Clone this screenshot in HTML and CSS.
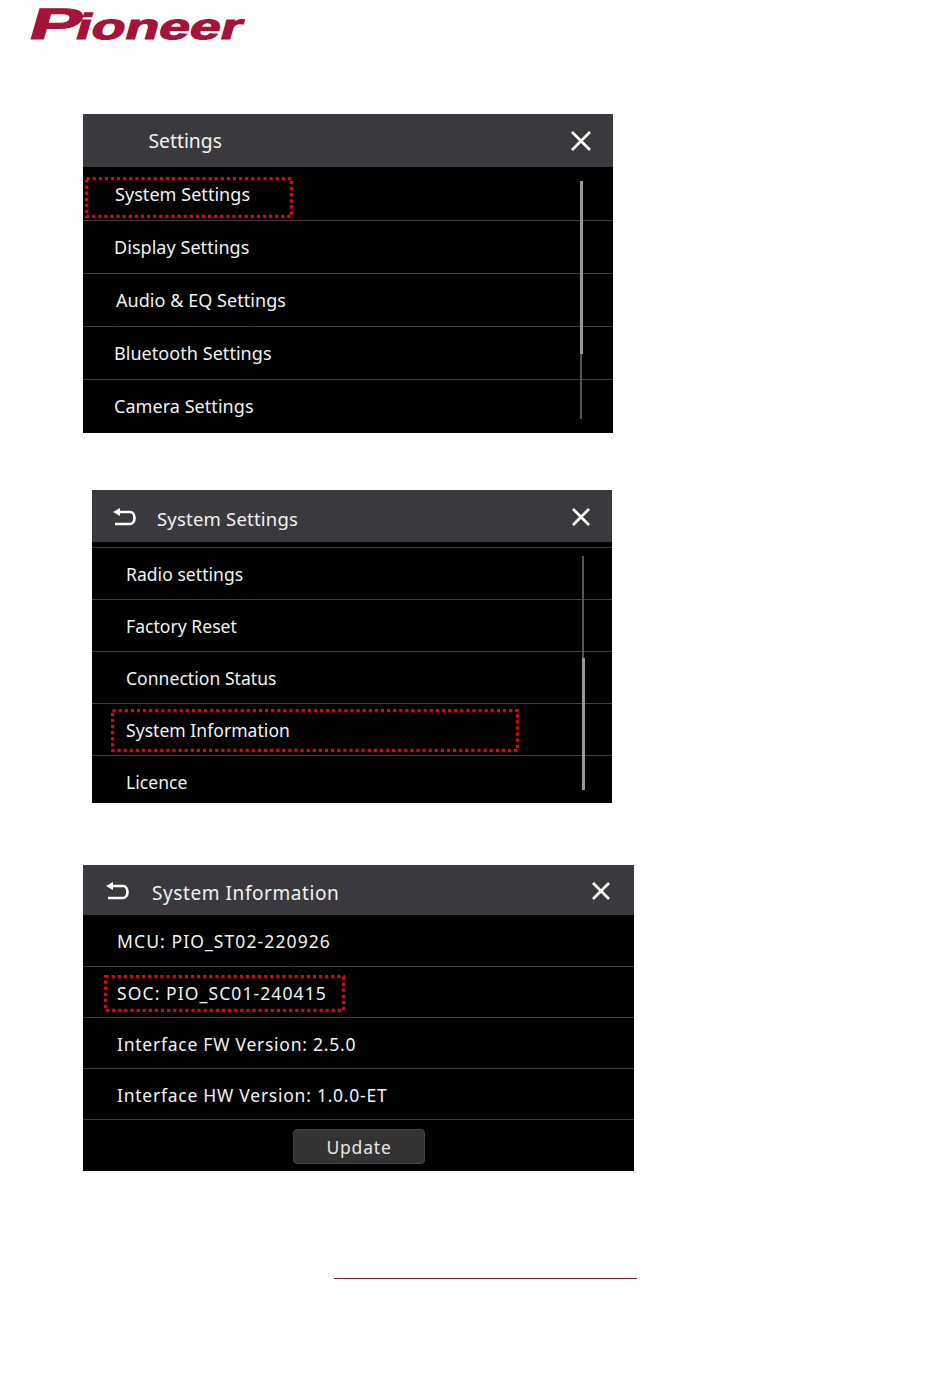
FILE: index.html
```html
<!DOCTYPE html>
<html lang="en">
<head>
<meta charset="utf-8">
<title>Pioneer System Information</title>
<link rel="stylesheet" href="styles.css">
</head>
<body>
<header class="brand">
  <svg class="logo" width="236" height="40" viewBox="0 0 236 40" aria-label="Pioneer">
    <g transform="skewX(-16)" class="logo-type">
      <text x="10" y="33" class="logo-p" textLength="52" lengthAdjust="spacingAndGlyphs">P</text>
      <text x="57" y="33" class="logo-rest" textLength="166" lengthAdjust="spacingAndGlyphs">ioneer</text>
    </g>
  </svg>
</header>

<section class="panel panel-a">
  <div class="bar"><span class="title">Settings</span>
    <svg class="close" width="22" height="22" viewBox="0 0 22 22"><path d="M2 2 L20 20 M20 2 L2 20"/></svg>
  </div>
  <div class="list">
    <div class="row row-first">System Settings
      <svg class="mark mark-a" width="208" height="41" viewBox="0 0 208 41"><rect x="1.5" y="1.5" width="205" height="38"/></svg>
    </div>
    <div class="row">Display Settings</div>
    <div class="row row-shift">Audio &amp; EQ Settings</div>
    <div class="row">Bluetooth Settings</div>
    <div class="row">Camera Settings</div>
    <div class="track"><div class="thumb"></div></div>
  </div>
</section>

<section class="panel panel-b">
  <div class="bar">
    <svg class="back" width="24" height="18" viewBox="0 0 24 18"><path class="back-line" d="M6 4 H18 C24 4 24 16 18 16 H3"/><path class="back-head" d="M1 4 L8 0 V8 Z"/></svg>
    <span class="title">System Settings</span>
    <svg class="close" width="20" height="20" viewBox="0 0 20 20"><path d="M2 2 L18 18 M18 2 L2 18"/></svg>
  </div>
  <div class="list">
    <div class="row row-first">Radio settings</div>
    <div class="row">Factory Reset</div>
    <div class="row">Connection Status</div>
    <div class="row">System Information
      <svg class="mark mark-b" width="408" height="43" viewBox="0 0 408 43"><rect x="1.5" y="1.5" width="405" height="40"/></svg>
    </div>
    <div class="row">Licence</div>
    <div class="track"><div class="thumb"></div></div>
  </div>
</section>

<section class="panel panel-c">
  <div class="bar">
    <svg class="back" width="24" height="18" viewBox="0 0 24 18"><path class="back-line" d="M6 4 H18 C24 4 24 16 18 16 H3"/><path class="back-head" d="M1 4 L8 0 V8 Z"/></svg>
    <span class="title">System Information</span>
    <svg class="close" width="20" height="20" viewBox="0 0 20 20"><path d="M2 2 L18 18 M18 2 L2 18"/></svg>
  </div>
  <div class="list">
    <div class="row row-code">MCU: PIO_ST02-220926</div>
    <div class="row row-code">SOC: PIO_SC01-240415
      <svg class="mark mark-c" width="241" height="37" viewBox="0 0 241 37"><rect x="1.5" y="1.5" width="238" height="34"/></svg>
    </div>
    <div class="row">Interface FW Version: 2.5.0</div>
    <div class="row">Interface HW Version: 1.0.0-ET</div>
    <div class="row row-action"><button class="update" type="button">Update</button></div>
  </div>
</section>

<div class="rule"></div>
</body>
</html>
```
FILE: styles.css
```css
* { box-sizing: border-box; }

html, body { margin: 0; background: #fff; }

body {
  height: 1387px;
  overflow: hidden;
  font-family: "Noto Sans", "Open Sans", sans-serif;
  color: #f2f2f2;
}

.brand { height: 114px; padding: 6px 0 0 26px; }
.logo { display: block; overflow: visible; }
.logo-type {
  fill: #a5123a;
  stroke: #a5123a;
  stroke-width: 1.2;
  font-family: "Liberation Sans", sans-serif;
  font-weight: 700;
}
.logo-p { font-size: 44px; }
.logo-rest { font-size: 36px; }

.panel { background: #000; overflow: hidden; }

.bar {
  display: flex;
  align-items: center;
  background: #3a3a3e;
}
.close { flex: none; margin-left: auto; }
.close path { fill: none; stroke: #fff; stroke-width: 2.6; }
.back { flex: none; }
.back-line { fill: none; stroke: #fff; stroke-width: 2.6; }
.back-head { fill: #fff; }

.list { position: relative; }
.row {
  position: relative;
  display: flex;
  align-items: center;
}
.row + .row { border-top: 1px solid #3e3e3e; }
.mark { position: absolute; pointer-events: none; }
.mark rect { fill: none; stroke: #e8000f; stroke-width: 3.4; stroke-dasharray: 3.2 2.9; }

.track { position: absolute; background: #555; width: 2px; }
.thumb { position: absolute; left: 0; width: 3px; background: #999; }

/* Settings */
.panel-a { margin-left: 83px; width: 530px; height: 319px; }
.panel-a .bar { height: 53px; padding: 0 21px 0 65.5px; }
.panel-a .title { font-size: 19.3px; }
.panel-a .row { height: 53px; padding-left: 31px; font-size: 18px; letter-spacing: 0.05px; }
.panel-a .row-first { padding-left: 32px; }
.panel-a .row-shift { padding-left: 33px; }
.panel-a .track { left: 497px; top: 14px; height: 238px; }
.panel-a .thumb { top: 0; height: 173px; }
.mark-a { left: 2px; top: 10px; }

/* System Settings */
.panel-b { margin: 57px 0 0 92px; width: 520px; height: 313px; }
.panel-b .bar { height: 52px; padding: 2px 21px 0 20px; }
.panel-b .back { margin-right: 21px; }
.panel-b .title { font-size: 18.5px; letter-spacing: 0.2px; padding-top: 2px; }
.panel-b .list { margin-top: 5px; border-top: 1px solid #3e3e3e; }
.panel-b .row { height: 52px; padding-left: 34px; font-size: 17.5px; letter-spacing: 0.05px; }
.panel-b .row-first { height: 51px; }
.panel-b .track { left: 490px; top: 8px; height: 234px; }
.panel-b .thumb { top: 102px; height: 132px; }
.mark-b { left: 19px; top: 5px; }

/* System Information */
.panel-c { margin: 62px 0 0 83px; width: 551px; height: 306px; }
.panel-c .bar { height: 50px; padding: 2px 23px 0 22px; }
.panel-c .back { margin-right: 23px; }
.panel-c .title { font-size: 19px; letter-spacing: 0.58px; padding-top: 4px; }
.panel-c .row { height: 51px; padding: 1px 0 0 34px; font-size: 17.5px; letter-spacing: 0.75px; }
.panel-c .row-code { letter-spacing: 1.1px; }
.panel-c .row-action { height: 52px; padding: 2px 0 0 210px; }
.mark-c { left: 21px; top: 8px; }

.update {
  width: 132px;
  height: 35px;
  border: 1px solid #444;
  border-radius: 4px;
  background: #333;
  color: #e6e6e6;
  font: inherit;
  letter-spacing: 0.8px;
}

.rule { margin: 107px 0 0 334px; width: 303px; height: 1px; background: #7d1a2d; }
```
